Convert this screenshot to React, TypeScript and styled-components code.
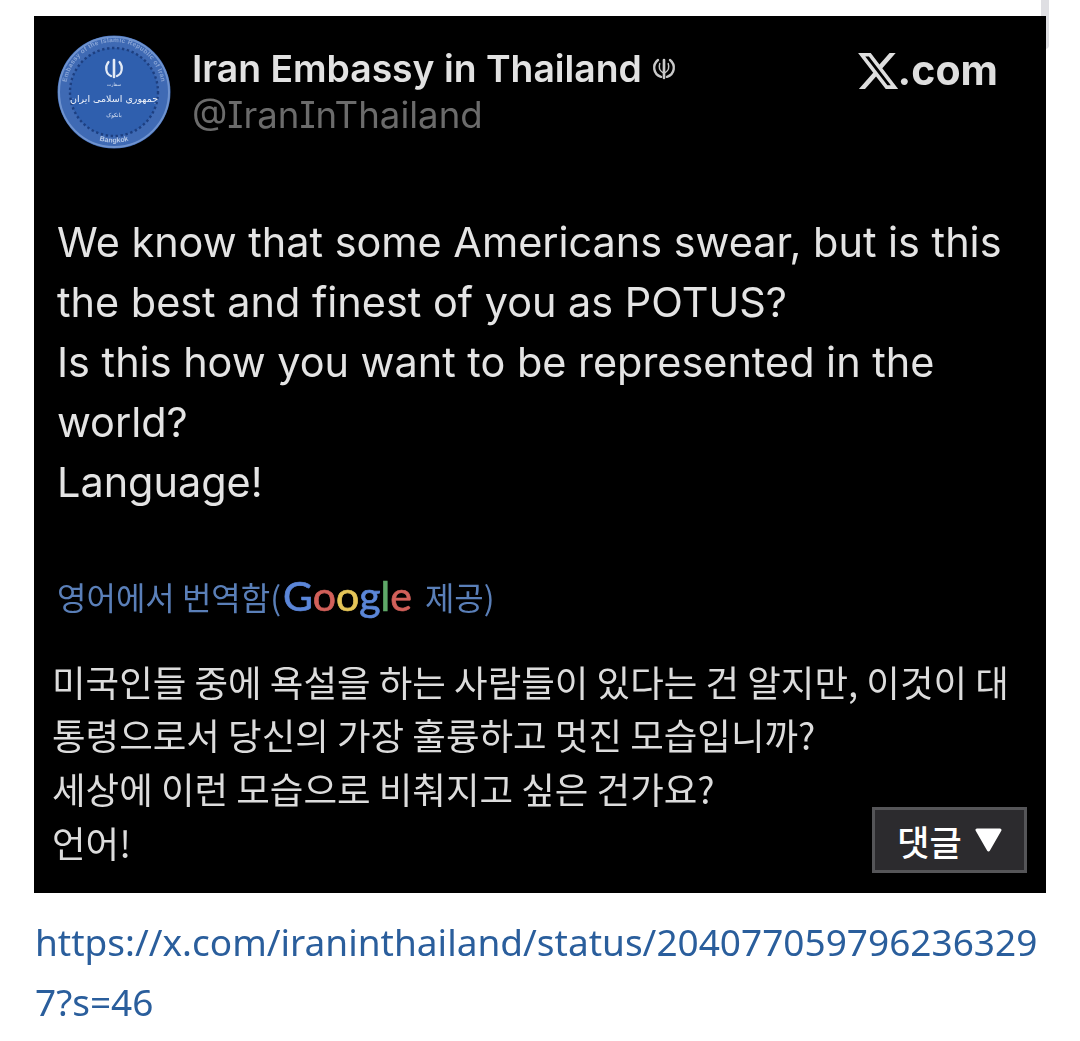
import React from "react";
import styled, { createGlobalStyle, css } from "styled-components";

const GOOGLE_LETTERS = [
	{ ch: "G", color: "#5b86d8" },
	{ ch: "o", color: "#d2605a" },
	{ ch: "o", color: "#e5c558" },
	{ ch: "g", color: "#5b86d8" },
	{ ch: "l", color: "#5fa868" },
	{ ch: "e", color: "#d2605a" },
];

const Seal = () => (
	<svg width="114" height="114" viewBox="0 0 114 114">
		<defs>
			<path id="sealTop" d="M 9.5 62 A 48 48 0 1 1 104.5 62" />
			<path id="sealBottom" d="M 32 101 A 51 51 0 0 0 82 101" />
		</defs>
		<circle cx="57" cy="57" r="56.5" fill="#3f6ab4" />
		<circle cx="57" cy="57" r="55" fill="none" stroke="#6f93cf" strokeWidth="2" />
		<circle cx="57" cy="57" r="44" fill="#2f5fae" stroke="#1d3f80" strokeWidth="2.4" strokeDasharray="2.4 2.6" />
		<text fontSize="6.5" fontWeight="700" fill="#89a5d6" fontFamily="Liberation Sans, sans-serif" letterSpacing="0.3">
			<textPath href="#sealTop" startOffset="50%" textAnchor="middle">
				Embassy of the Islamic Republic of Iran
			</textPath>
		</text>
		<text fontSize="7" fontWeight="700" fill="#b9cbe9" fontFamily="Liberation Sans, sans-serif">
			<textPath href="#sealBottom" startOffset="50%" textAnchor="middle">
				Bangkok
			</textPath>
		</text>
		<g fill="none" stroke="#e4ebf6" strokeLinecap="round">
			<path d="M51.5 27 C47.5 32 49 39 54 41" strokeWidth="2.2" />
			<path d="M62.5 27 C66.5 32 65 39 60 41" strokeWidth="2.2" />
			<path d="M57 25 V42" strokeWidth="2.6" />
		</g>
		<text x="57" y="51" textAnchor="middle" fontSize="4.5" fill="#dfe7f5" fontFamily="DejaVu Sans, sans-serif">سفارت</text>
		<text x="57" y="67" textAnchor="middle" fontSize="9.5" fill="#eef2fa" fontFamily="DejaVu Sans, sans-serif">جمهوری اسلامی ایران</text>
		<text x="57" y="82" textAnchor="middle" fontSize="5.5" fill="#dfe7f5" fontFamily="DejaVu Sans, sans-serif">بانکوک</text>
	</svg>
);

const Emblem = () => (
	<svg width="24" height="24" viewBox="2 3.5 20 18" fill="none" stroke="#c9c9c9" strokeLinecap="round">
		<path d="M7 5 C2 9 3 17 9.5 19" strokeWidth="2" />
		<path d="M17 5 C22 9 21 17 14.5 19" strokeWidth="2" />
		<path d="M12 5 V20" strokeWidth="2.2" />
		<path d="M8.5 8 C7.5 11 8.5 14 11 15.5" strokeWidth="1.2" />
		<path d="M15.5 8 C16.5 11 15.5 14 13 15.5" strokeWidth="1.2" />
	</svg>
);

const XLogo = () => (
	<svg width="40" height="36" viewBox="1.2 2.2 21.6 19.6" preserveAspectRatio="none" fill="#dedede">
		<path d="M18.244 2.25h3.308l-7.227 8.26 8.502 11.24H16.17l-5.214-6.817L4.99 21.75H1.68l7.73-8.835L1.254 2.25H8.08l4.713 6.231zm-1.161 17.52h1.833L7.084 4.126H5.117z" />
	</svg>
);

const DownArrow = () => (
	<svg width="27" height="24" viewBox="0 0 27 24" fill="#fff" stroke="#fff" strokeWidth="3" strokeLinejoin="round">
		<path d="M2 2 H25 L13.5 22 Z" />
	</svg>
);

const App = () => (
	<Page>
		<GlobalStyle />
		<ScrollThumb />
		<Card>
			<Header>
				<Seal />
				<Identity>
					<NameRow>
						<Name>Iran Embassy in Thailand</Name>
						<Emblem />
					</NameRow>
					<Handle>@IranInThailand</Handle>
				</Identity>
				<Brand>
					<XLogo />
					<BrandText>.com</BrandText>
				</Brand>
			</Header>
			<Original>
				We know that some Americans swear, but is this
				<br />
				the best and finest of you as POTUS?
				<br />
				Is this how you want to be represented in the
				<br />
				world?
				<br />
				Language!
			</Original>
			<TranslatedBy>
				영어에서 번역함(
				<GoogleWord>
					{GOOGLE_LETTERS.map((l, i) => (
						<Letter key={i} $color={l.color}>
							{l.ch}
						</Letter>
					))}
				</GoogleWord>
				제공)
			</TranslatedBy>
			<Translation>
				미국인들 중에 욕설을 하는 사람들이 있다는 건 알지만, 이것이 대
				<br />
				통령으로서 당신의 가장 훌륭하고 멋진 모습입니까?
				<br />
				세상에 이런 모습으로 비춰지고 싶은 건가요?
				<br />
				언어!
			</Translation>
			<CommentButton>
				댓글 <DownArrow />
			</CommentButton>
		</Card>
		<SourceLink href="#">
			https://x.com/iraninthailand/status/204077059796236329
			<br />
			7?s=46
		</SourceLink>
	</Page>
);

// the source is a recompressed photo of a post, so its type is a bit soft
const soft = css`
	filter: blur(0.6px);
`;

const GlobalStyle = createGlobalStyle`
	html, body {
		margin: 0;
		padding: 0;
		background: #fff;
		overflow: hidden;
	}
`;
const Page = styled.div`
	height: 1041px;
	padding: 16px 0 0 34px;
	box-sizing: border-box;
	font-family: "Inter", "Noto Sans CJK KR", sans-serif;
`;
const ScrollThumb = styled.div`
	position: fixed;
	top: 0;
	left: 1041px;
	width: 8px;
	height: 49px;
	background: #dfdfe3;
	border-radius: 0 0 4px 4px;
`;
const Card = styled.div`
	position: relative;
	width: 1012px;
	height: 877px;
	box-sizing: border-box;
	padding: 19px 0 0 23px;
	background: #000;
	color: #e4e4e4;
`;
const Header = styled.div`
	display: flex;
	align-items: flex-start;
	height: 114px;
	${soft}
`;
const Identity = styled.div`
	display: flex;
	flex-direction: column;
	margin-left: 21px;
	padding-top: 10px;
`;
const NameRow = styled.div`
	display: flex;
	align-items: center;
	gap: 10px;
	height: 47px;
`;
const Name = styled.div`
	font-size: 37.3px;
	font-weight: 600;
	color: #e2e2e2;
	white-space: nowrap;
`;
const Handle = styled.div`
	font-size: 36.6px;
	line-height: 47px;
	color: #6b6b6b;
	font-feature-settings: "cv08";
	white-space: nowrap;
`;
const Brand = styled.div`
	display: flex;
	align-items: flex-end;
	margin: 16px 48px 0 auto;
`;
const BrandText = styled.span`
	font-size: 41px;
	line-height: 38px;
	font-weight: 700;
	color: #dedede;
`;
const Original = styled.div`
	margin: 64px 0 0 0;
	font-size: 41.4px;
	line-height: 59.9px;
	color: #e4e4e4;
	white-space: nowrap;
	${soft}
`;
const TranslatedBy = styled.div`
	display: flex;
	align-items: center;
	height: 50px;
	margin: 58px 0 0 0;
	font-size: 32px;
	color: #5a7fb8;
	font-family: "Noto Sans CJK KR", sans-serif;
	font-weight: 400;
	white-space: nowrap;
	${soft}
`;
const GoogleWord = styled.span`
	font-family: "Lato", sans-serif;
	font-size: 41px;
	font-weight: 400;
	-webkit-text-stroke: 0.7px currentColor;
	margin: 0 13px 0 2px;
`;
const Letter = styled.span<{ $color: string }>`
	color: ${(p) => p.$color};
`;
const Translation = styled.div`
	margin: 34px 0 0 -5px;
	font-family: "Noto Sans CJK KR", sans-serif;
	font-size: 36.5px;
	font-weight: 400;
	line-height: 53.8px;
	color: #dcdcdc;
	white-space: nowrap;
	${soft}
`;
const CommentButton = styled.div`
	position: absolute;
	right: 19px;
	bottom: 20px;
	width: 155px;
	height: 66px;
	box-sizing: border-box;
	display: flex;
	align-items: center;
	justify-content: center;
	gap: 13px;
	background: #2c2b2e;
	border: 3px solid #555558;
	font-family: "Noto Sans CJK KR", sans-serif;
	font-size: 35px;
	font-weight: 500;
	color: #fff;
`;
const SourceLink = styled.a`
	display: block;
	margin: 19px 0 0 1px;
	font-family: "Noto Sans", sans-serif;
	font-size: 37px;
	line-height: 60px;
	color: #2a5e9c;
	text-decoration: none;
	white-space: nowrap;
	${soft}
`;

export default App;
